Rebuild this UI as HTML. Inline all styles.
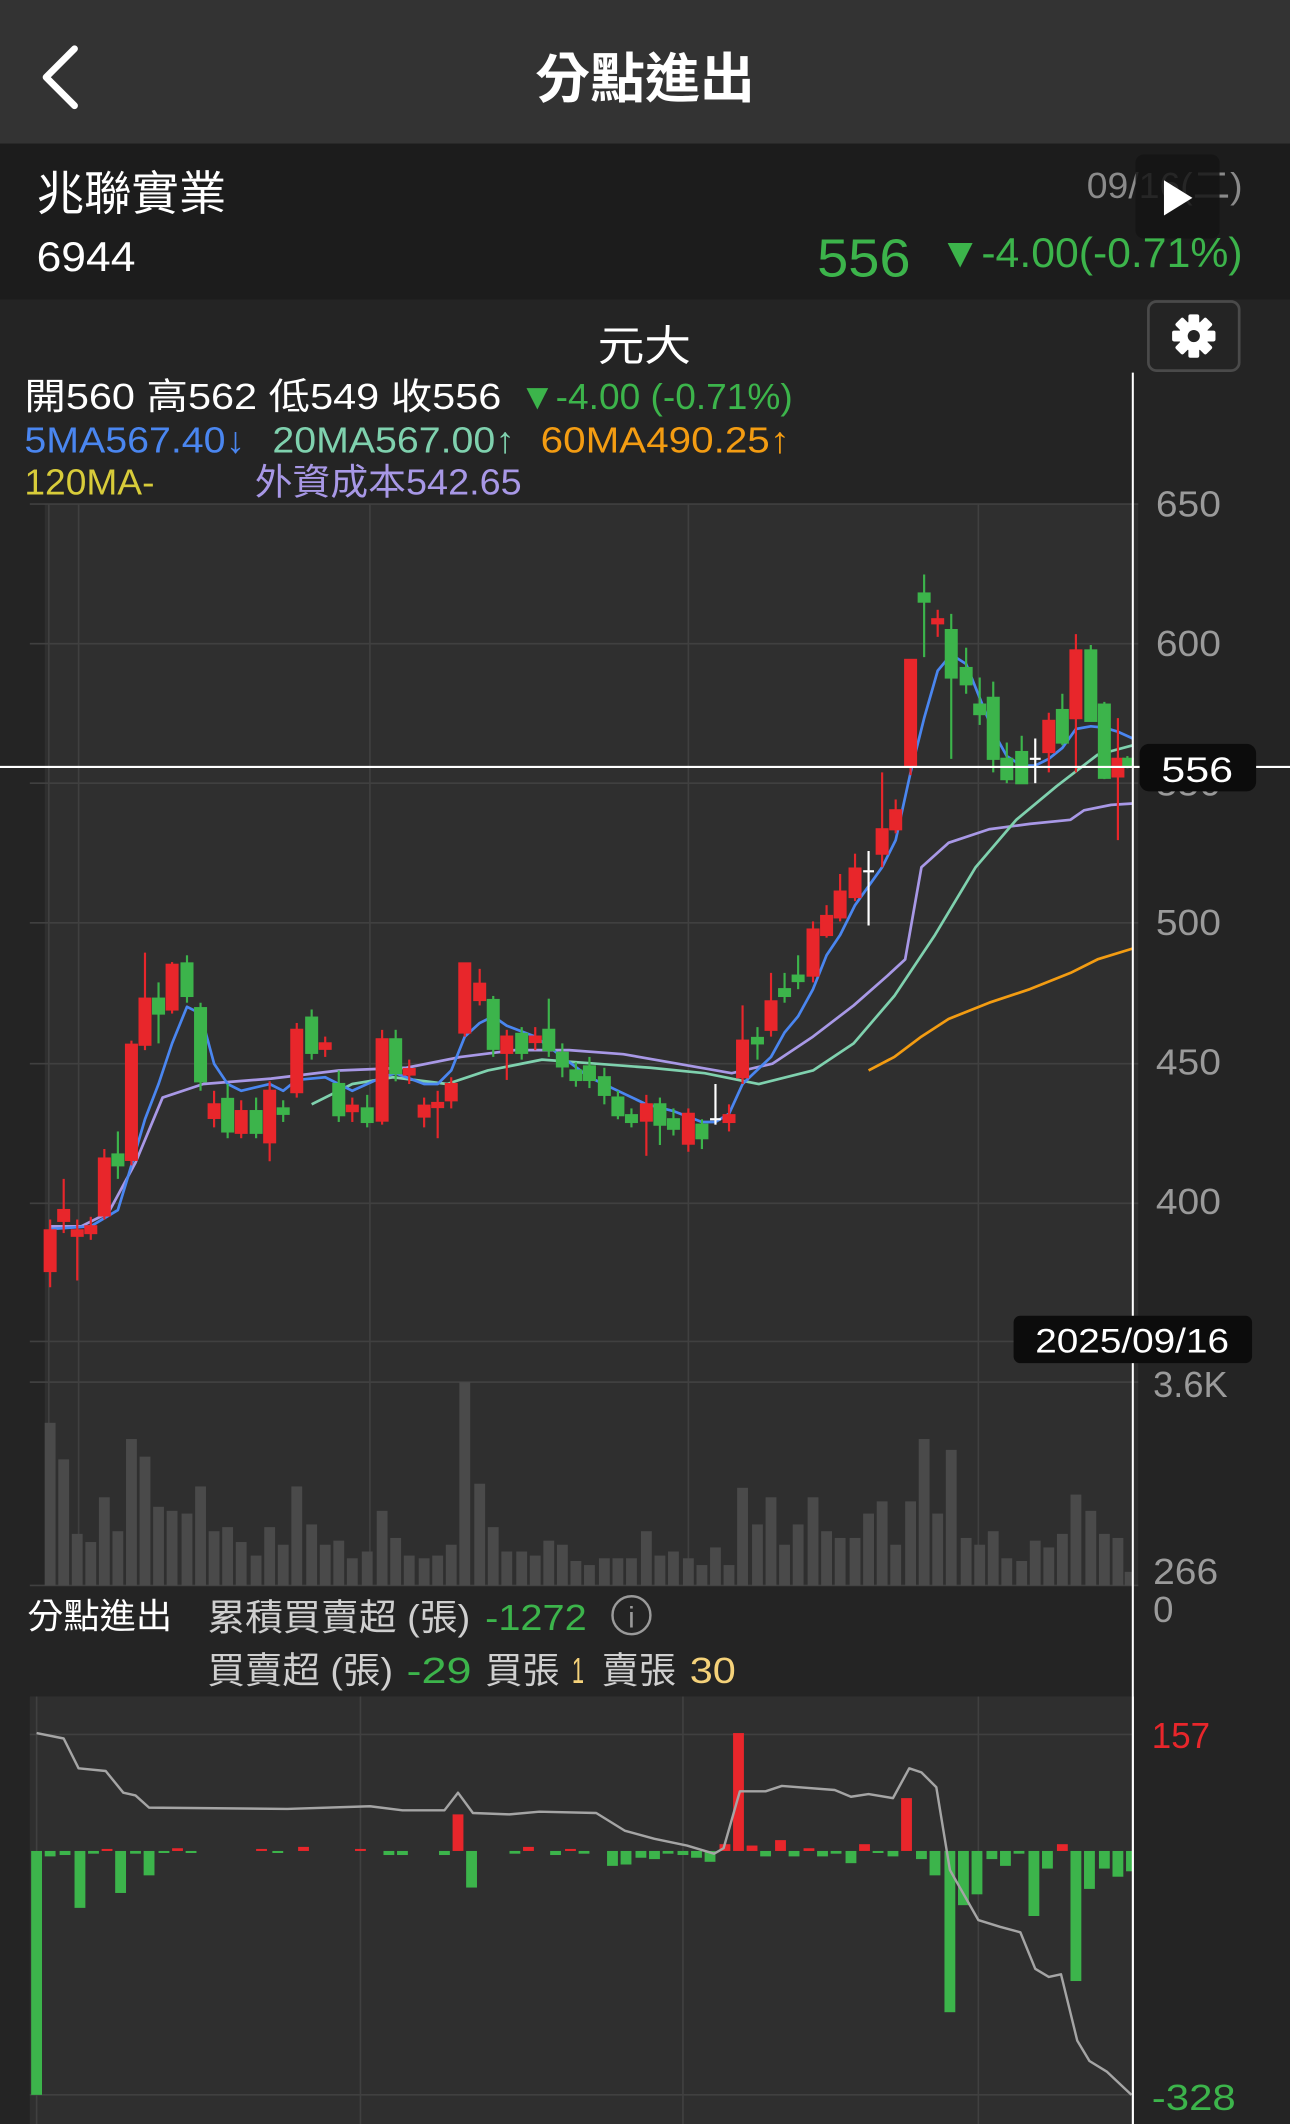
<!DOCTYPE html>
<html><head><meta charset="utf-8"><style>
html,body{margin:0;padding:0;background:#242424;}
svg{display:block;width:1290px;height:2124px;}
text{font-family:"Liberation Sans","Noto Sans CJK TC",sans-serif;}
</style></head><body>
<svg viewBox="0 0 952 1567.5" preserveAspectRatio="none" xmlns="http://www.w3.org/2000/svg">
<rect x="0" y="0" width="952" height="1568" fill="#242424"/>
<rect x="0" y="0" width="952" height="106" fill="#333333"/>
<path d="M55 36 L34 57 L55 78" fill="none" stroke="#fff" stroke-width="5" stroke-linecap="round" stroke-linejoin="round"/>
<text x="395" y="72" fill="#fff" font-size="40" font-weight="bold" textLength="162" lengthAdjust="spacingAndGlyphs">分點進出</text>
<rect x="0" y="106" width="952" height="115" fill="#1c1c1c"/>
<text x="27" y="155" fill="#fff" font-size="35" textLength="140" lengthAdjust="spacingAndGlyphs">兆聯實業</text>
<text x="27" y="200" fill="#fff" font-size="31" textLength="73" lengthAdjust="spacingAndGlyphs">6944</text>
<text x="802" y="146" fill="#8a8a8a" font-size="27" textLength="115" lengthAdjust="spacingAndGlyphs">09/16(二)</text>
<rect x="838" y="114" width="62" height="62" rx="6" fill="#141414" opacity="0.85"/>
<path d="M859 133 L880 146 L859 159 Z" fill="#fff"/>
<text x="603" y="204" fill="#3cb44b" font-size="40" textLength="69" lengthAdjust="spacingAndGlyphs">556</text>
<text x="693" y="197" fill="#3cb44b" font-size="31" textLength="224" lengthAdjust="spacingAndGlyphs">▼-4.00(-0.71%)</text>
<text x="441" y="266" fill="#fff" font-size="31" textLength="69" lengthAdjust="spacingAndGlyphs">元大</text>
<rect x="847.5" y="222.5" width="67" height="51" rx="6" fill="#242424" stroke="#4a4a4a" stroke-width="2"/>
<g transform="translate(881,248)" fill="#fff">
<circle r="11"/>
<rect x="-4" y="-16" width="8" height="32" rx="1.5"/>
<rect x="-4" y="-16" width="8" height="32" rx="1.5" transform="rotate(45)"/>
<rect x="-4" y="-16" width="8" height="32" rx="1.5" transform="rotate(90)"/>
<rect x="-4" y="-16" width="8" height="32" rx="1.5" transform="rotate(135)"/>
<circle r="4.5" fill="#242424"/>
</g>
<g font-size="27" lengthAdjust="spacingAndGlyphs">
<text x="18" y="302" fill="#fff" textLength="352" lengthAdjust="spacingAndGlyphs">開560 高562 低549 收556</text>
<text x="383" y="302" fill="#3cb44b" textLength="202" lengthAdjust="spacingAndGlyphs">▼-4.00 (-0.71%)</text>
<text x="18" y="334" fill="#4a86f0" textLength="163" lengthAdjust="spacingAndGlyphs">5MA567.40↓</text>
<text x="201" y="334" fill="#7fd1ae" textLength="179" lengthAdjust="spacingAndGlyphs">20MA567.00↑</text>
<text x="399" y="334" fill="#f39c12" textLength="184" lengthAdjust="spacingAndGlyphs">60MA490.25↑</text>
<text x="18" y="365" fill="#d8cc3a" textLength="96" lengthAdjust="spacingAndGlyphs">120MA-</text>
<text x="188" y="365" fill="#a898e6" textLength="197" lengthAdjust="spacingAndGlyphs">外資成本542.65</text>
</g>
<!-- plot area -->
<rect x="33" y="372" width="807" height="798" fill="#2f2f2f"/>
<g stroke="#404040" stroke-width="1.2">
<line x1="22" y1="372" x2="840" y2="372"/><line x1="22" y1="475" x2="840" y2="475"/><line x1="22" y1="578" x2="840" y2="578"/><line x1="22" y1="681" x2="840" y2="681"/><line x1="22" y1="785" x2="840" y2="785"/><line x1="22" y1="888" x2="840" y2="888"/><line x1="22" y1="990" x2="840" y2="990"/><line x1="22" y1="1020" x2="840" y2="1020"/><line x1="22" y1="1170" x2="840" y2="1170"/>
<line x1="36" y1="372" x2="36" y2="1170"/><line x1="58" y1="372" x2="58" y2="1170"/><line x1="273" y1="372" x2="273" y2="1170"/><line x1="508" y1="372" x2="508" y2="1170"/><line x1="722" y1="372" x2="722" y2="1170"/>
</g>
<g fill="#9a9a9a" font-size="27">
<text x="853" y="381" textLength="48" lengthAdjust="spacingAndGlyphs">650</text><text x="853" y="484" textLength="48" lengthAdjust="spacingAndGlyphs">600</text><text x="853" y="587" textLength="48" lengthAdjust="spacingAndGlyphs">550</text><text x="853" y="690" textLength="48" lengthAdjust="spacingAndGlyphs">500</text><text x="853" y="793" textLength="48" lengthAdjust="spacingAndGlyphs">450</text><text x="853" y="896" textLength="48" lengthAdjust="spacingAndGlyphs">400</text>
<text x="851" y="1031" textLength="55" lengthAdjust="spacingAndGlyphs">3.6K</text><text x="851" y="1169" textLength="48" lengthAdjust="spacingAndGlyphs">266</text><text x="851" y="1197" textLength="15" lengthAdjust="spacingAndGlyphs">0</text>
</g>
<!-- volume -->
<g fill="#4a4a4a">
<rect x="33" y="1050" width="8" height="120"/><rect x="43" y="1077" width="8" height="93"/><rect x="53" y="1132" width="8" height="38"/><rect x="63" y="1138" width="8" height="32"/><rect x="73" y="1105" width="8" height="65"/><rect x="83" y="1130" width="8" height="40"/><rect x="93" y="1062" width="8" height="108"/><rect x="103" y="1075" width="8" height="95"/><rect x="113" y="1112" width="8" height="58"/><rect x="123" y="1115" width="8" height="55"/><rect x="134" y="1117" width="8" height="53"/><rect x="144" y="1097" width="8" height="73"/><rect x="154" y="1130" width="8" height="40"/><rect x="164" y="1127" width="8" height="43"/><rect x="174" y="1138" width="8" height="32"/><rect x="185" y="1148" width="8" height="22"/><rect x="195" y="1127" width="8" height="43"/><rect x="205" y="1140" width="8" height="30"/><rect x="215" y="1097" width="8" height="73"/><rect x="226" y="1125" width="8" height="45"/><rect x="236" y="1140" width="8" height="30"/><rect x="246" y="1137" width="8" height="33"/><rect x="256" y="1150" width="8" height="20"/><rect x="267" y="1145" width="8" height="25"/><rect x="278" y="1115" width="8" height="55"/><rect x="288" y="1135" width="8" height="35"/><rect x="298" y="1148" width="8" height="22"/><rect x="309" y="1150" width="8" height="20"/><rect x="319" y="1148" width="8" height="22"/><rect x="329" y="1140" width="8" height="30"/><rect x="339" y="1020" width="8" height="150"/><rect x="350" y="1095" width="8" height="75"/><rect x="360" y="1127" width="8" height="43"/><rect x="370" y="1145" width="8" height="25"/><rect x="381" y="1145" width="8" height="25"/><rect x="391" y="1148" width="8" height="22"/><rect x="401" y="1137" width="8" height="33"/><rect x="411" y="1140" width="8" height="30"/><rect x="421" y="1152" width="8" height="18"/><rect x="431" y="1155" width="8" height="15"/><rect x="442" y="1150" width="8" height="20"/><rect x="452" y="1150" width="8" height="20"/><rect x="462" y="1150" width="8" height="20"/><rect x="473" y="1130" width="8" height="40"/><rect x="483" y="1148" width="8" height="22"/><rect x="493" y="1145" width="8" height="25"/><rect x="504" y="1150" width="8" height="20"/><rect x="514" y="1155" width="8" height="15"/><rect x="524" y="1142" width="8" height="28"/><rect x="534" y="1155" width="8" height="15"/><rect x="544" y="1098" width="8" height="72"/><rect x="555" y="1125" width="8" height="45"/><rect x="565" y="1105" width="8" height="65"/><rect x="575" y="1140" width="8" height="30"/><rect x="585" y="1125" width="8" height="45"/><rect x="596" y="1105" width="8" height="65"/><rect x="606" y="1130" width="8" height="40"/><rect x="616" y="1135" width="8" height="35"/><rect x="627" y="1135" width="8" height="35"/><rect x="637" y="1117" width="8" height="53"/><rect x="647" y="1108" width="8" height="62"/><rect x="657" y="1140" width="8" height="30"/><rect x="668" y="1108" width="8" height="62"/><rect x="678" y="1062" width="8" height="108"/><rect x="688" y="1117" width="8" height="53"/><rect x="698" y="1070" width="8" height="100"/><rect x="709" y="1135" width="8" height="35"/><rect x="719" y="1140" width="8" height="30"/><rect x="729" y="1130" width="8" height="40"/><rect x="739" y="1150" width="8" height="20"/><rect x="750" y="1152" width="8" height="18"/><rect x="760" y="1137" width="8" height="33"/><rect x="770" y="1142" width="8" height="28"/><rect x="780" y="1132" width="8" height="38"/><rect x="790" y="1103" width="8" height="67"/><rect x="801" y="1115" width="8" height="55"/><rect x="811" y="1132" width="8" height="38"/><rect x="821" y="1135" width="8" height="35"/><rect x="830" y="1160" width="6" height="10"/>
</g>
<!-- MA lines -->
<g fill="none" stroke-width="2" stroke-linejoin="round">
<polyline stroke="#a898e6" points="37,905 60,905 80,895 100,858 120,810 150,800 200,796 250,790 300,788 340,780 380,775 420,775 460,778 500,785 540,792 570,785 600,765 630,742 655,720 668,708 680,640 700,622 730,612 760,608 790,605 800,598 820,594 836,593"/>
<polyline stroke="#7fd1ae" points="230,815 260,800 290,795 330,800 360,790 400,782 440,785 480,788 520,792 560,800 600,790 630,770 660,735 690,690 720,640 750,605 780,580 810,557 836,550"/>
<polyline stroke="#f39c12" points="641,790 660,780 680,765 700,752 730,740 760,730 790,718 810,708 836,700"/>
<polyline stroke="#4a86f0" points="37,907 67,905 87,893 97,860 107,826 117,800 127,770 138,743 148,748 158,785 168,800 178,805 199,800 209,805 219,797 240,795 260,805 282,795 292,792 313,800 323,800 333,790 343,765 354,755 364,750 374,757 395,765 415,780 435,795 456,805 477,815 497,820 518,828 528,828 538,822 548,800 569,780 579,762 589,750 600,730 610,705 620,690 631,668 651,640 661,620 672,570 682,530 692,495 702,483 713,490 723,515 733,540 743,558 754,565 764,565 774,560 784,552 794,538 805,536 815,537 825,540 836,545"/>
</g>
<!-- candles -->
<g stroke-width="1.6">
<g fill="#e8262b" stroke="#e8262b">
<line x1="37" y1="900" x2="37" y2="950"/><rect x="33" y="908" width="8" height="30"/>
<line x1="47" y1="870" x2="47" y2="910"/><rect x="43" y="893" width="8" height="8"/>
<line x1="57" y1="900" x2="57" y2="945"/><rect x="53" y="908" width="8" height="4"/>
<line x1="67" y1="898" x2="67" y2="915"/><rect x="63" y="905" width="8" height="5"/>
<line x1="77" y1="848" x2="77" y2="900"/><rect x="73" y="855" width="8" height="42"/>
<line x1="97" y1="768" x2="97" y2="860"/><rect x="93" y="771" width="8" height="85"/>
<line x1="107" y1="703" x2="107" y2="775"/><rect x="103" y="737" width="8" height="34"/>
<line x1="127" y1="710" x2="127" y2="748"/><rect x="123" y="712" width="8" height="33"/>
<line x1="158" y1="805" x2="158" y2="832"/><rect x="154" y="815" width="8" height="10"/>
<line x1="178" y1="812" x2="178" y2="840"/><rect x="174" y="820" width="8" height="16"/>
<line x1="199" y1="798" x2="199" y2="857"/><rect x="195" y="805" width="8" height="38"/>
<line x1="219" y1="755" x2="219" y2="810"/><rect x="215" y="760" width="8" height="46"/>
<line x1="240" y1="765" x2="240" y2="780"/><rect x="236" y="770" width="8" height="4"/>
<line x1="260" y1="810" x2="260" y2="828"/><rect x="256" y="816" width="8" height="4"/>
<line x1="282" y1="760" x2="282" y2="830"/><rect x="278" y="767" width="8" height="60"/>
<line x1="302" y1="782" x2="302" y2="800"/><rect x="298" y="789" width="8" height="4"/>
<line x1="313" y1="810" x2="313" y2="832"/><rect x="309" y="816" width="8" height="8"/>
<line x1="323" y1="805" x2="323" y2="840"/><rect x="319" y="814" width="8" height="3"/>
<line x1="333" y1="795" x2="333" y2="818"/><rect x="329" y="800" width="8" height="12"/>
<line x1="343" y1="711" x2="343" y2="765"/><rect x="339" y="711" width="8" height="51"/>
<line x1="354" y1="715" x2="354" y2="742"/><rect x="350" y="726" width="8" height="12"/>
<line x1="374" y1="760" x2="374" y2="797"/><rect x="370" y="765" width="8" height="12"/>
<line x1="395" y1="758" x2="395" y2="775"/><rect x="391" y="765" width="8" height="4"/>
<line x1="477" y1="808" x2="477" y2="853"/><rect x="473" y="815" width="8" height="12"/>
<line x1="508" y1="818" x2="508" y2="850"/><rect x="504" y="822" width="8" height="22"/>
<line x1="538" y1="815" x2="538" y2="835"/><rect x="534" y="823" width="8" height="5"/>
<line x1="548" y1="742" x2="548" y2="800"/><rect x="544" y="768" width="8" height="27"/>
<line x1="569" y1="718" x2="569" y2="765"/><rect x="565" y="739" width="8" height="21"/>
<line x1="600" y1="680" x2="600" y2="725"/><rect x="596" y="686" width="8" height="34"/>
<line x1="610" y1="668" x2="610" y2="692"/><rect x="606" y="676" width="8" height="14"/>
<line x1="620" y1="645" x2="620" y2="680"/><rect x="616" y="658" width="8" height="19"/>
<line x1="631" y1="630" x2="631" y2="665"/><rect x="627" y="641" width="8" height="21"/>
<line x1="651" y1="570" x2="651" y2="640"/><rect x="647" y="612" width="8" height="18"/>
<line x1="661" y1="590" x2="661" y2="615"/><rect x="657" y="598" width="8" height="14"/>
<line x1="672" y1="487" x2="672" y2="572"/><rect x="668" y="487" width="8" height="79"/>
<line x1="692" y1="450" x2="692" y2="470"/><rect x="688" y="457" width="8" height="3"/>
<line x1="774" y1="526" x2="774" y2="570"/><rect x="770" y="532" width="8" height="23"/>
<line x1="794" y1="468" x2="794" y2="570"/><rect x="790" y="480" width="8" height="50"/>
<line x1="825" y1="530" x2="825" y2="620"/><rect x="821" y="560" width="8" height="13"/>
</g>
<g fill="#3cb44b" stroke="#3cb44b">
<line x1="87" y1="835" x2="87" y2="870"/><rect x="83" y="852" width="8" height="8"/>
<line x1="117" y1="725" x2="117" y2="770"/><rect x="113" y="737" width="8" height="11"/>
<line x1="138" y1="705" x2="138" y2="740"/><rect x="134" y="711" width="8" height="24"/>
<line x1="148" y1="740" x2="148" y2="805"/><rect x="144" y="744" width="8" height="54"/>
<line x1="168" y1="800" x2="168" y2="840"/><rect x="164" y="811" width="8" height="24"/>
<line x1="189" y1="810" x2="189" y2="840"/><rect x="185" y="820" width="8" height="16"/>
<line x1="209" y1="812" x2="209" y2="828"/><rect x="205" y="818" width="8" height="4"/>
<line x1="230" y1="745" x2="230" y2="782"/><rect x="226" y="751" width="8" height="26"/>
<line x1="250" y1="790" x2="250" y2="828"/><rect x="246" y="800" width="8" height="23"/>
<line x1="271" y1="808" x2="271" y2="832"/><rect x="267" y="818" width="8" height="10"/>
<line x1="292" y1="760" x2="292" y2="798"/><rect x="288" y="767" width="8" height="25"/>
<line x1="364" y1="735" x2="364" y2="780"/><rect x="360" y="738" width="8" height="36"/>
<line x1="385" y1="758" x2="385" y2="782"/><rect x="381" y="763" width="8" height="14"/>
<line x1="405" y1="737" x2="405" y2="780"/><rect x="401" y="760" width="8" height="15"/>
<line x1="415" y1="770" x2="415" y2="795"/><rect x="411" y="777" width="8" height="10"/>
<line x1="425" y1="784" x2="425" y2="802"/><rect x="421" y="790" width="8" height="7"/>
<line x1="435" y1="780" x2="435" y2="803"/><rect x="431" y="787" width="8" height="10"/>
<line x1="446" y1="788" x2="446" y2="815"/><rect x="442" y="795" width="8" height="13"/>
<line x1="456" y1="805" x2="456" y2="826"/><rect x="452" y="810" width="8" height="13"/>
<line x1="466" y1="818" x2="466" y2="832"/><rect x="462" y="823" width="8" height="5"/>
<line x1="487" y1="810" x2="487" y2="845"/><rect x="483" y="815" width="8" height="15"/>
<line x1="497" y1="818" x2="497" y2="838"/><rect x="493" y="826" width="8" height="7"/>
<line x1="518" y1="826" x2="518" y2="848"/><rect x="514" y="830" width="8" height="10"/>
<line x1="559" y1="758" x2="559" y2="782"/><rect x="555" y="766" width="8" height="4"/>
<line x1="579" y1="718" x2="579" y2="740"/><rect x="575" y="730" width="8" height="5"/>
<line x1="589" y1="705" x2="589" y2="730"/><rect x="585" y="720" width="8" height="4"/>
<line x1="682" y1="424" x2="682" y2="485"/><rect x="678" y="438" width="8" height="6"/>
<line x1="702" y1="453" x2="702" y2="560"/><rect x="698" y="465" width="8" height="35"/>
<line x1="713" y1="478" x2="713" y2="512"/><rect x="709" y="493" width="8" height="12"/>
<line x1="723" y1="500" x2="723" y2="535"/><rect x="719" y="520" width="8" height="7"/>
<line x1="733" y1="503" x2="733" y2="570"/><rect x="729" y="515" width="8" height="45"/>
<line x1="743" y1="548" x2="743" y2="578"/><rect x="739" y="560" width="8" height="15"/>
<line x1="754" y1="543" x2="754" y2="578"/><rect x="750" y="555" width="8" height="23"/>
<line x1="784" y1="512" x2="784" y2="550"/><rect x="780" y="524" width="8" height="24"/>
<line x1="805" y1="476" x2="805" y2="532"/><rect x="801" y="480" width="8" height="52"/>
<line x1="815" y1="518" x2="815" y2="575"/><rect x="811" y="520" width="8" height="54"/>
<line x1="832" y1="558" x2="832" y2="567"/><rect x="829" y="560" width="7" height="5"/>
</g>
<g stroke="#fff" stroke-width="1.6">
<line x1="528" y1="800" x2="528" y2="830"/><line x1="524" y1="826" x2="532" y2="826"/>
<line x1="641" y1="628" x2="641" y2="683"/><line x1="637" y1="643" x2="645" y2="643"/>
<line x1="764" y1="545" x2="764" y2="578"/><line x1="760" y1="560" x2="768" y2="560"/>
</g>
</g>
<!-- crosshair -->
<line x1="0" y1="566" x2="952" y2="566" stroke="#fff" stroke-width="1.5"/>
<line x1="836" y1="275" x2="836" y2="1568" stroke="#fff" stroke-width="1.5"/>
<rect x="841" y="549" width="86" height="35" rx="7" fill="#0c0c0c"/>
<text x="857" y="577" fill="#fff" font-size="26" textLength="53" lengthAdjust="spacingAndGlyphs">556</text>
<rect x="748" y="971" width="176" height="35" rx="5" fill="#0c0c0c"/>
<text x="764" y="998" fill="#fff" font-size="25" textLength="143" lengthAdjust="spacingAndGlyphs">2025/09/16</text>
<!-- section labels -->
<text x="20" y="1202" fill="#fff" font-size="26" textLength="107" lengthAdjust="spacingAndGlyphs">分點進出</text>
<g font-size="27">
<text x="153" y="1203" fill="#cfcfcf" textLength="194" lengthAdjust="spacingAndGlyphs">累積買賣超 (張)</text>
<text x="358" y="1203" fill="#3cb44b" textLength="75" lengthAdjust="spacingAndGlyphs">-1272</text>
<text x="153" y="1242" fill="#cfcfcf" textLength="137" lengthAdjust="spacingAndGlyphs">買賣超 (張)</text>
<text x="300" y="1242" fill="#3cb44b" textLength="48" lengthAdjust="spacingAndGlyphs">-29</text>
<text x="358" y="1242" fill="#cfcfcf" textLength="55" lengthAdjust="spacingAndGlyphs">買張</text>
<text x="422" y="1242" fill="#f5d27a" textLength="9" lengthAdjust="spacingAndGlyphs">1</text>
<text x="444" y="1242" fill="#cfcfcf" textLength="55" lengthAdjust="spacingAndGlyphs">賣張</text>
<text x="509" y="1242" fill="#f5d27a" textLength="34" lengthAdjust="spacingAndGlyphs">30</text>
</g>
<circle cx="466" cy="1192" r="14" fill="none" stroke="#9a9a9a" stroke-width="1.8"/>
<text x="466" y="1201" fill="#9a9a9a" font-size="22" text-anchor="middle" font-family="Liberation Serif, serif">i</text>
<!-- bottom chart -->
<rect x="22" y="1252" width="814" height="316" fill="#2f2f2f"/>
<g stroke="#404040" stroke-width="1.2">
<line x1="22" y1="1280" x2="836" y2="1280"/><line x1="22" y1="1546" x2="836" y2="1546"/>
<line x1="27" y1="1252" x2="27" y2="1568"/><line x1="266" y1="1252" x2="266" y2="1568"/><line x1="504" y1="1252" x2="504" y2="1568"/><line x1="722" y1="1252" x2="722" y2="1568"/>
</g>
<text x="850" y="1290" fill="#e8262b" font-size="27" textLength="43" lengthAdjust="spacingAndGlyphs">157</text>
<text x="850" y="1557" fill="#3cb44b" font-size="27" textLength="62" lengthAdjust="spacingAndGlyphs">-328</text>
<g fill="#3cb44b">
<rect x="23" y="1366" width="8" height="180"/><rect x="33" y="1366" width="8" height="4"/><rect x="44" y="1366" width="8" height="3"/><rect x="55" y="1366" width="8" height="42"/><rect x="65" y="1366" width="8" height="2"/><rect x="85" y="1366" width="8" height="31"/><rect x="96" y="1366" width="8" height="2"/><rect x="106" y="1366" width="8" height="18"/><rect x="117" y="1366" width="8" height="1.5"/><rect x="137" y="1366" width="8" height="1.5"/>
<rect x="201" y="1366" width="8" height="1.5"/><rect x="283" y="1366" width="8" height="3"/><rect x="293" y="1366" width="8" height="3"/><rect x="324" y="1366" width="8" height="3"/><rect x="344" y="1366" width="8" height="27"/>
<rect x="376" y="1366" width="8" height="2"/><rect x="406" y="1366" width="8" height="3"/><rect x="427" y="1366" width="8" height="2"/>
<rect x="448" y="1366" width="8" height="11"/><rect x="458" y="1366" width="8" height="10"/><rect x="469" y="1366" width="8" height="5"/><rect x="479" y="1366" width="8" height="6"/><rect x="489" y="1366" width="8" height="2"/><rect x="500" y="1366" width="8" height="3"/><rect x="510" y="1366" width="8" height="5"/><rect x="520" y="1366" width="8" height="8"/>
<rect x="561" y="1366" width="8" height="4"/><rect x="582" y="1366" width="8" height="4"/><rect x="603" y="1366" width="8" height="4"/><rect x="613" y="1366" width="8" height="2"/><rect x="624" y="1366" width="8" height="9"/><rect x="644" y="1366" width="8" height="1.5"/><rect x="655" y="1366" width="8" height="4"/>
<rect x="676" y="1366" width="8" height="6"/><rect x="686" y="1366" width="8" height="18"/><rect x="697" y="1366" width="8" height="119"/><rect x="707" y="1366" width="8" height="40"/><rect x="717" y="1366" width="8" height="32"/><rect x="728" y="1366" width="8" height="6"/><rect x="738" y="1366" width="8" height="11"/><rect x="748" y="1366" width="8" height="2"/><rect x="759" y="1366" width="8" height="48"/><rect x="769" y="1366" width="8" height="13"/><rect x="790" y="1366" width="8" height="96"/><rect x="800" y="1366" width="8" height="28"/><rect x="811" y="1366" width="8" height="13"/><rect x="821" y="1366" width="8" height="19"/><rect x="831" y="1366" width="5" height="15"/>
</g>
<g fill="#e8262b">
<rect x="75" y="1364.5" width="8" height="1.5"/><rect x="127" y="1364" width="8" height="2"/><rect x="189" y="1364.5" width="8" height="1.5"/><rect x="220" y="1363" width="8" height="3"/><rect x="262" y="1364.5" width="8" height="1.5"/><rect x="334" y="1339" width="8" height="27"/><rect x="386" y="1363" width="8" height="3"/><rect x="417" y="1364.5" width="8" height="1.5"/><rect x="531" y="1361" width="8" height="5"/><rect x="541" y="1279" width="8" height="87"/><rect x="551" y="1362" width="8" height="4"/><rect x="572" y="1358" width="8" height="8"/><rect x="593" y="1364" width="8" height="2"/><rect x="634" y="1361" width="8" height="5"/><rect x="665" y="1327" width="8" height="39"/><rect x="780" y="1361" width="8" height="5"/>
</g>
<polyline fill="none" stroke="#a5a5a5" stroke-width="1.8" stroke-linejoin="round" points="27,1279 47,1283 58,1305 78,1307 91,1323 100,1325 110,1334 212,1335 273,1333 297,1336 328,1336 338,1323 349,1338 376,1339 398,1337 440,1338 461,1351 483,1357 507,1362 527,1368 534,1364 546,1322 565,1322 577,1318 616,1321 628,1326 641,1324 659,1327 671,1305 680,1308 691,1319 701,1380 722,1417 738,1422 753,1426 764,1453 774,1459 783,1457 795,1506 804,1521 817,1529 835,1546"/>
<line x1="836" y1="1252" x2="836" y2="1568" stroke="#fff" stroke-width="1.5"/>
</svg>
</body></html>
